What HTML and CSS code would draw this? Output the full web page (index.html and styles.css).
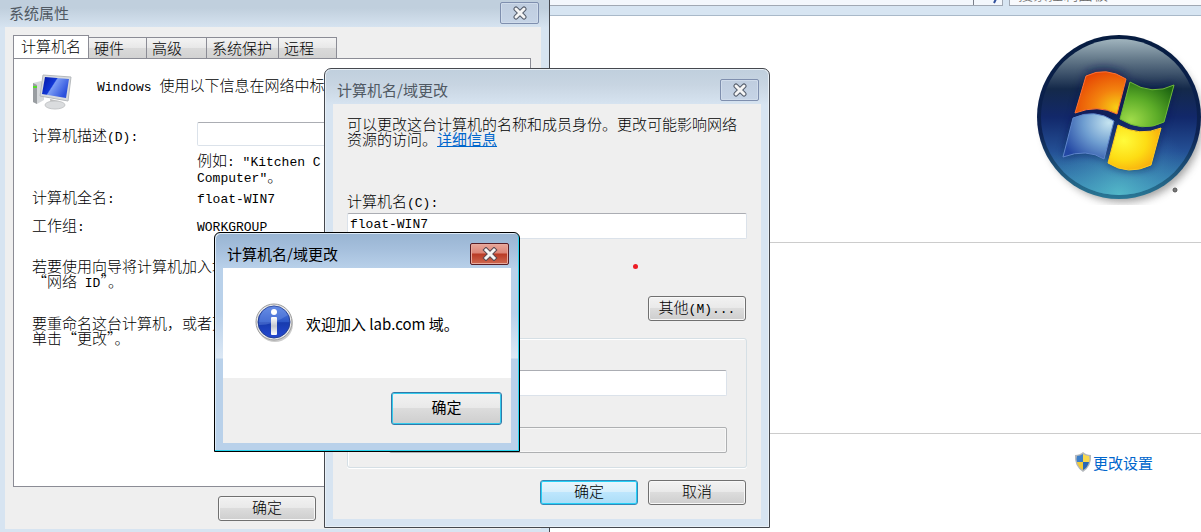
FILE: index.html
```html
<!DOCTYPE html>
<html lang="zh-CN">
<head>
<meta charset="utf-8">
<title>系统属性</title>
<link rel="stylesheet" href="styles.css">
</head>
<body>
<main class="desktop">
  <div class="explorer">
    <header class="toolbar">
      <div class="address"><button class="refresh" aria-label="刷新"><svg width="12" height="12" viewBox="0 0 12 12"><path d="M2 3h6q3 0 2 4l-2 4" fill="none" stroke="#31509c" stroke-width="2"/></svg></button></div>
      <input class="search" type="text" placeholder="搜索控制面板" aria-label="搜索控制面板">
    </header>
    <section class="panel-logo">
      <svg class="logo" width="172" height="176" viewBox="0 0 172 176" role="img" aria-label="Windows">
        <defs>
          <linearGradient id="orb" x1="0" y1="0" x2="0" y2="1"><stop offset="0" stop-color="#a0b4bd"/><stop offset=".13" stop-color="#64798a"/><stop offset=".32" stop-color="#14294a"/><stop offset=".5" stop-color="#12286a"/><stop offset=".72" stop-color="#245095"/><stop offset="1" stop-color="#409ebd"/></linearGradient>
          <radialGradient id="glow" cx=".5" cy="1" r=".5"><stop offset="0" stop-color="#58bfcb" stop-opacity=".8"/><stop offset="1" stop-color="#3a79b5" stop-opacity="0"/></radialGradient>
          <linearGradient id="rim" x1="0" y1="0" x2="0" y2="1"><stop offset="0" stop-color="#061c40"/><stop offset=".6" stop-color="#0d2253"/><stop offset="1" stop-color="#2a7896"/></linearGradient>
          <radialGradient id="red" cx=".82" cy=".85" r=".95"><stop offset="0" stop-color="#f7cf15"/><stop offset=".45" stop-color="#f3820e"/><stop offset="1" stop-color="#e54304"/></radialGradient>
          <radialGradient id="green" cx=".2" cy=".85" r="1"><stop offset="0" stop-color="#a0dc4a"/><stop offset=".5" stop-color="#5cac28"/><stop offset="1" stop-color="#1d6611"/></radialGradient>
          <radialGradient id="blue" cx=".9" cy=".2" r="1"><stop offset="0" stop-color="#c5e4f0"/><stop offset=".5" stop-color="#6e9dd0"/><stop offset="1" stop-color="#2347a3"/></radialGradient>
          <radialGradient id="yellow" cx=".3" cy=".35" r=".85"><stop offset="0" stop-color="#fffb3b"/><stop offset=".5" stop-color="#fddc14"/><stop offset="1" stop-color="#f79b0b"/></radialGradient>
          <filter id="soft" x="-20%" y="-20%" width="140%" height="140%"><feGaussianBlur stdDeviation="4"/></filter>
        </defs>
        <circle cx="93" cy="94" r="79" fill="#777" opacity=".7" filter="url(#soft)"/>
        <circle cx="89" cy="88" r="82" fill="url(#rim)"/>
        <circle cx="89" cy="88" r="78" fill="url(#orb)"/>
        <circle cx="89" cy="88" r="78" fill="url(#glow)"/>
        <path d="M56 43Q76 32 97 46L84 89Q68 77 45 83ZM99 51Q122 64 144 54L134 93Q112 104 88 90ZM43 89Q65 79 83 92L74 130Q57 119 33 128ZM88 95Q110 106 132 98L122 137Q98 147 77 134Z" fill="#07184d" opacity=".65" filter="url(#soft)"/>
        <path d="M56 47Q76 37 96 50L87 85Q68 75 45 84Z" fill="url(#red)" stroke="#ff7134"/>
        <path d="M100 53Q122 67 144 56L134 93Q112 104 90 90Z" fill="url(#green)" stroke="#6fbb37"/>
        <path d="M43 89Q65 79 84 92L74 130Q57 119 33 128Z" fill="url(#blue)" stroke="#5e86cb"/>
        <path d="M88 96Q110 108 131 99L121 136Q98 147 78 134Z" fill="url(#yellow)" stroke="#ffcc20"/>
        <circle cx="145" cy="161" r="2" fill="#777" stroke="#555"/>
      </svg>
    </section>
    <section class="panel-empty"></section>
    <section class="panel-link">
      <a href="#" class="change"><svg width="18" height="20" viewBox="0 0 18 20"><path d="M9 0Q12 3 17 3Q18 14 9 20Q0 14 1 3Q6 3 9 0Z" fill="#b3b7bb"/><path d="M9 2Q6 4 3 4Q2 7 3 10H9Z" fill="#3c7fc9"/><path d="M9 2Q12 4 15 4Q16 7 15 10H9Z" fill="#f8d94e"/><path d="M3 10H9V18Q4 15 3 10Z" fill="#f2cb36"/><path d="M15 10H9V18Q14 15 15 10Z" fill="#2a68b6"/></svg>更改设置</a>
    </section>
  </div>

  <section class="window win-system">
    <header class="titlebar"><h2>系统属性</h2><button class="close" aria-label="关闭"><svg width="16" height="14" viewBox="0 0 16 14"><path d="M4 3L12 11M12 3L4 11" stroke="#555d6b" stroke-width="5" stroke-linecap="round"/><path d="M4 3L12 11M12 3L4 11" stroke="#f5f5f5" stroke-width="3" stroke-linecap="round"/></svg></button></header>
    <div class="client sys-client">
      <nav class="tabs"><button class="tab active">计算机名</button><button class="tab">硬件</button><button class="tab mid">高级</button><button class="tab wide">系统保护</button><button class="tab">远程</button></nav>
      <div class="sheet">
        <div class="intro">
          <svg width="40" height="38" viewBox="0 0 40 38">
            <defs><linearGradient id="scr" x1="0" y1="0" x2="1" y2=".5"><stop offset="0" stop-color="#0416a4"/><stop offset=".46" stop-color="#1238d6"/><stop offset=".5" stop-color="#7a9bf4"/><stop offset="1" stop-color="#2b50dc"/></linearGradient></defs>
            <path d="M1 9L9 7L12 9V26L5 30L1 28Z" fill="#d5d8db"/><path d="M1 9L5 11V30L1 28Z" fill="#999da1"/><rect x="1" y="12" width="4" height="2" fill="#53dc28"/>
            <path d="M18 25L27 27L28 32H19Z" fill="#bbb"/><ellipse cx="23" cy="31" rx="10" ry="4" fill="#dadcde" stroke="#c4c6c8"/>
            <path d="M11 1L39 3L36 27L8 22Z" fill="#d8dbde" stroke="#b5b9bd"/><path d="M13 3L37 5L34 24L10 20Z" fill="url(#scr)"/>
          </svg>
          <p><span class="m">Windows </span>使用以下信息在网络中标</p>
        </div>
        <div class="form">
          <label for="desc">计算机描述<span class="m">(D):</span></label>
          <input id="desc" class="field" type="text">
          <span></span><p class="hint">例如<span class="m">: "Kitchen C</span><br><span class="m">Computer"</span>。</p>
          <span class="name-row">计算机全名<span class="m">:</span></span><span class="name-row"><span class="m">float-WIN7</span></span>
          <span class="group-row">工作组<span class="m">:</span></span><span class="group-row"><span class="m">WORKGROUP</span></span>
        </div>
        <p class="note">若要使用向导将计算机加入域<br>“网络<span class="m"> ID</span>”。</p>
        <p class="note">要重命名这台计算机，或者更<br>单击“更改”。</p>
      </div>
      <div class="actions"><button class="btn">确定</button></div>
    </div>
  </section>

  <section class="window win-domain">
    <header class="titlebar"><h2>计算机名/域更改</h2><button class="close" aria-label="关闭"><svg width="16" height="14" viewBox="0 0 16 14"><path d="M4 3L12 11M12 3L4 11" stroke="#555d6b" stroke-width="5" stroke-linecap="round"/><path d="M4 3L12 11M12 3L4 11" stroke="#f5f5f5" stroke-width="3" stroke-linecap="round"/></svg></button></header>
    <div class="client domain-client">
      <p class="lead">可以更改这台计算机的名称和成员身份。更改可能影响网络<br>资源的访问。<a href="#">详细信息</a></p>
      <label for="cname">计算机名<span class="m">(C):</span></label>
      <input id="cname" class="field m" type="text" value="float-WIN7">
      <div class="actions more"><button class="btn">其他<span class="m">(M)...</span></button></div>
      <div class="group"><input class="field" type="text" aria-label="域"><input class="field off" type="text" disabled aria-label="工作组"></div>
      <div class="actions"><button class="btn primary">确定</button><button class="btn">取消</button></div>
    </div>
  </section>
  <span class="pointer"></span>

  <section class="window win-message" role="dialog" aria-label="计算机名/域更改">
    <header class="titlebar"><h2>计算机名/域更改</h2><button class="close red" aria-label="关闭"><svg width="16" height="14" viewBox="0 0 16 14"><path d="M4 3L12 11M12 3L4 11" stroke="#5b4a52" stroke-width="5" stroke-linecap="square"/><path d="M4 3L12 11M12 3L4 11" stroke="#f5f5f5" stroke-width="3" stroke-linecap="square"/></svg></button></header>
    <div class="client">
      <div class="message">
        <svg width="40" height="40" viewBox="0 0 40 40">
          <defs><linearGradient id="info" x1="0" y1="0" x2="0" y2="1"><stop offset="0" stop-color="#5a83e0"/><stop offset=".5" stop-color="#2b55c6"/><stop offset=".52" stop-color="#173bae"/><stop offset="1" stop-color="#2448d0"/></linearGradient><linearGradient id="stem" x1="0" y1="0" x2="0" y2="1"><stop offset="0" stop-color="#fff"/><stop offset=".5" stop-color="#c3c6cf"/><stop offset="1" stop-color="#fff"/></linearGradient></defs>
          <circle cx="20" cy="21" r="18" fill="#999" opacity=".5"/><circle cx="19" cy="19" r="18" fill="#e9e9e9" stroke="#9b9b9b"/><circle cx="19" cy="19" r="16" fill="url(#info)" stroke="#243f94"/>
          <path d="M4 22Q18 22 33 12Q28 3 19 3Q4 4 4 22Z" fill="#7ea1ee" opacity=".35"/><circle cx="19" cy="9" r="3" fill="#fff"/><rect x="16" y="14" width="6" height="18" rx="1" fill="url(#stem)"/>
        </svg>
        <p>欢迎加入 lab.com 域。</p>
      </div>
      <div class="confirm"><button class="btn large">确定</button></div>
    </div>
  </section>
</main>
</body>
</html>
```
FILE: styles.css
```css
* { box-sizing: border-box; }
body {
  margin: 0;
  background: #fff;
  color: #000;
  font: 15px/15px "Noto Sans CJK SC", sans-serif;
  font-weight: 300;
}
p, h2 { margin: 0; }
button, input { margin: 0; font: inherit; color: inherit; }
svg { display: block; flex: none; }
a { color: #0066cc; font-weight: 400; }
.m { font-family: "Liberation Mono", "Noto Sans CJK SC", monospace; font-size: 13px; line-height: 8px; white-space: pre; }
.desktop { position: relative; min-height: 100vh; overflow: hidden; }

/* Control panel window behind the dialogs */
.explorer { padding-left: 548px; }
.toolbar {
  display: flex;
  gap: 6px;
  height: 34px;
  margin-top: -18px;
  padding-bottom: 9px;
  background: #d7e5f2;
  border-bottom: 1px solid #a9b9c9;
}
.address { flex: 1; display: flex; justify-content: flex-end; background: #f3f7fc; border: 1px solid #a0a8b3; }
.refresh { width: 29px; padding: 8px 0 0 12px; border: 0; border-left: 1px solid #7a808a; background: none; }
.search { width: 192px; padding: 0 8px 2px; border: 1px solid #a0a8b3; border-right: 0; background: #f8fafd; }
.search::placeholder { color: #666; opacity: 1; }
.panel-logo { display: flex; justify-content: flex-end; height: 227px; padding-top: 13px; border-bottom: 1px solid #ccc; }
.logo { margin-right: -1px; }
.panel-empty { height: 191px; border-bottom: 1px solid #ccc; }
.panel-link { display: flex; justify-content: flex-end; padding: 18px 48px 0 0; }
.change { display: flex; align-items: center; gap: 1px; text-decoration: none; }

/* Window frame */
.window { position: absolute; display: flex; flex-direction: column; background: #d7e4f1; border: 1px solid #45484e; }
.titlebar {
  display: flex;
  justify-content: space-between;
  height: 35px;
  padding: 10px 2px 0 4px;
}
.titlebar h2 { font-size: 15px; font-weight: 400; line-height: 21px; color: #505963; }
.close {
  display: grid;
  place-items: center;
  width: 39px;
  height: 22px;
  padding: 0;
  border: 1px solid #7f8fae;
  border-radius: 2px;
  background: linear-gradient(#bfcddf, #c6d4e6);
  box-shadow: inset 0 0 0 1px #d0dceb;
}
.close.red { border-color: #581d25; background: linear-gradient(#e9a79a, #dc8577 45%, #b93a25 50%, #cf6951); box-shadow: inset 0 0 0 1px #e6a99d; }
.client { flex: 1; display: flex; flex-direction: column; background: #efefef; }

/* Controls */
.btn {
  width: 98px;
  height: 25px;
  padding: 0 0 3px;
  border: 1px solid #707070;
  border-radius: 3px;
  background: linear-gradient(#f2f2f2, #e9e9e9 48%, #dcdcdc 50%, #cecece);
  box-shadow: inset 0 0 0 1px #f8f8f8;
  line-height: 20px;
}
.btn.primary { border-color: #3587b5; background: linear-gradient(#e8f6fd, #d6effc 48%, #bde6fd 50%, #abddf7); box-shadow: inset 0 0 0 1px #25d0f7; }
.btn.large { width: 111px; height: 33px; border-color: #3279a8; box-shadow: inset 0 0 0 1px #34cbed; font-weight: 400; }
.field { height: 26px; padding: 0 2px 3px; border: 1px solid #dbe2ea; border-top-color: #abadb3; border-radius: 2px; background: #fff; }
.field.off { border-color: #aeb0b2; background: #efefef; box-shadow: inset 0 0 0 1px #f8f8f8; }
.actions { display: flex; justify-content: flex-end; gap: 10px; }

/* System properties */
.win-system { left: 0; top: -9px; width: 550px; min-height: 550px; padding: 0 8px 11px 5px; border-left: 0; background: linear-gradient(#c0cfdd 0, #c0cfdd 16px, #d7e4f1 36px); }
.win-system .titlebar { margin-right: -4px; padding: 10px 6px 0 4px; }
.sys-client { padding: 8px 10px 8px 8px; }
.tabs { display: flex; align-items: flex-end; height: 23px; }
.tab { width: 58px; height: 21px; padding: 0 0 1px 5px; border: 1px solid #8b8c95; border-width: 1px 1px 0 0; background: linear-gradient(#f4f4f4, #e8e8e8 48%, #dadada 50%, #d2d2d2); text-align: left; }
.tab.active { width: 76px; height: 24px; padding: 0 0 4px 7px; margin-bottom: -1px; border-left-width: 1px; background: #fff; }
.tab.mid { width: 60px; }
.tab.wide { width: 72px; }
.sheet { flex: 1; padding: 15px 18px; border: 1px solid #8b8c95; background: #fff; }
.intro { display: flex; gap: 25px; height: 48px; }
.intro p { padding-top: 3px; white-space: nowrap; }
.form { display: grid; grid-template-columns: 165px 1fr; align-items: center; }
.form .field { height: 24px; }
.hint { padding: 6px 0 5px; line-height: 16px; }
.name-row { height: 20px; }
.group-row { height: 25px; padding-top: 8px; }
.note { padding-top: 24px; }
.note + .note { padding-top: 27px; }
.sys-client > .actions { padding: 9px 215px 0 0; }

/* Name change dialog */
.win-domain { left: 324px; top: 68px; width: 446px; min-height: 459px; padding: 0 8px 8px; border-radius: 7px 7px 0 0; background: linear-gradient(#c0cfdd 0, #c8d5e2 16px, #d7e4f1 36px); box-shadow: inset 0 0 0 1px #e8f0f7; }
.domain-client { padding: 12px 14px 14px; }
.lead { height: 77px; white-space: nowrap; }
.domain-client label { height: 20px; }
.domain-client .m.field { width: 400px; }
.more { padding: 57px 1px 17px 0; }
.group { display: grid; gap: 31px; padding: 31px 19px 14px 41px; margin-bottom: 12px; border: 1px solid #d5dfe5; border-radius: 3px; box-shadow: inset 1px 1px #fff, 0 1px #fff; }
.group .field { width: 100%; }
.group + .actions { padding-right: 1px; }
.pointer { position: absolute; left: 633px; top: 264px; width: 5px; height: 5px; border-radius: 50%; background: #ed1c24; }

/* Message box */
.win-message { left: 214px; top: 232px; width: 306px; min-height: 220px; padding: 0 8px 8px; border-color: #000; border-radius: 6px 6px 0 0; background: linear-gradient(#98b4d2 0, #a5bfdc 16px, #b9d1ea 36px, #b9d1ea 80px, #dce8f5 125px, #b9d1ea 126px); box-shadow: inset -1px -1px #28d4ee, inset 1px 1px #dceaf7; }
.win-message h2 { color: #000; }
.message { display: flex; align-items: center; gap: 11px; height: 110px; padding-left: 32px; background: #fff; font-weight: 400; }
.confirm { display: flex; justify-content: flex-end; padding: 14px 9px 0 0; }
```
